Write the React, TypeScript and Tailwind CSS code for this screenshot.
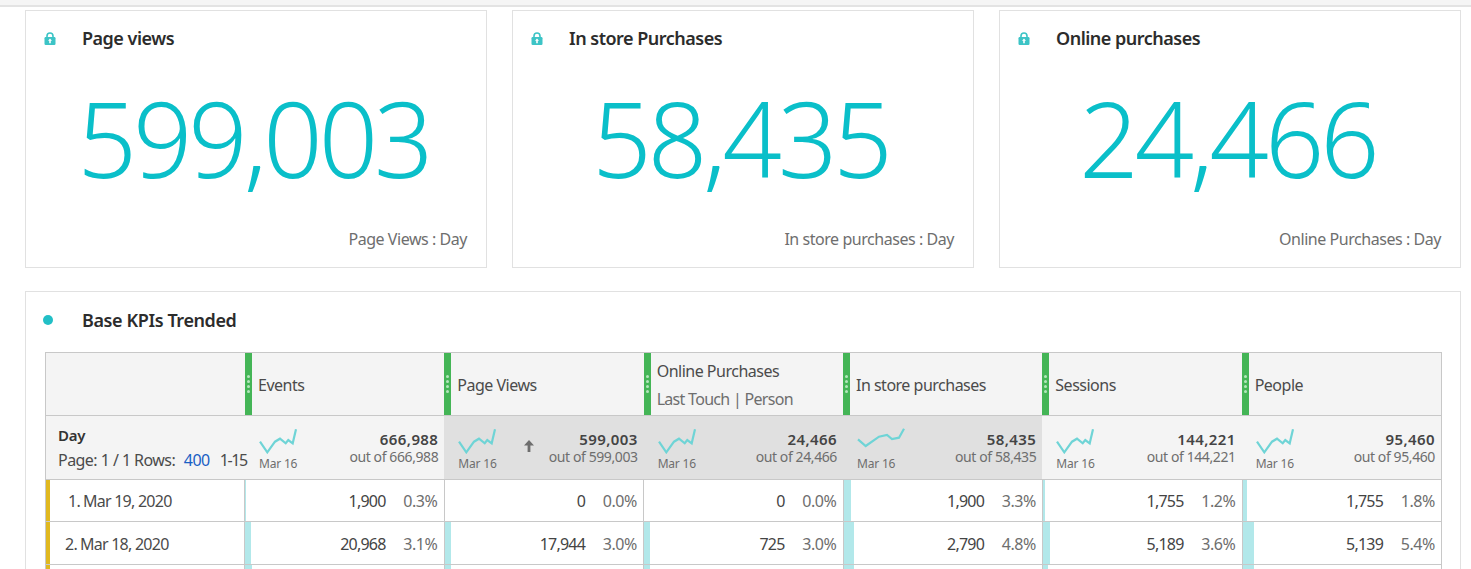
import React from 'react'

const font = { fontFamily: '"Noto Sans", "Open Sans", sans-serif' }

const normalSpark = 'M1 13.7 L8.3 24.3 L16 13.7 L21 10.7 L26.7 15.3 L29.3 12 L33.7 15.3 L37 1.3'
const flatSpark = 'M1 11.3 L8.7 18 L22 8.7 L30 7 L35 11 L42 9.7 L47 0.8'

const columns = [
  { name: 'Events', total: '666,988', selected: false, spark: normalSpark, rows: [['1,900', '0.3%', 1], ['20,968', '3.1%', 6], ['', '', 7]] },
  { name: 'Page Views', total: '599,003', selected: true, arrow: true, spark: normalSpark, rows: [['0', '0.0%', 0], ['17,944', '3.0%', 6], ['', '', 6]] },
  { name: 'Online Purchases', sub: 'Last Touch | Person', total: '24,466', selected: true, spark: normalSpark, rows: [['0', '0.0%', 0], ['725', '3.0%', 6], ['', '', 6]] },
  { name: 'In store purchases', total: '58,435', selected: true, spark: flatSpark, rows: [['1,900', '3.3%', 7], ['2,790', '4.8%', 10], ['', '', 10]] },
  { name: 'Sessions', total: '144,221', selected: false, spark: normalSpark, rows: [['1,755', '1.2%', 2], ['5,189', '3.6%', 7], ['', '', 5]] },
  { name: 'People', total: '95,460', selected: false, spark: normalSpark, rows: [['1,755', '1.8%', 4], ['5,139', '5.4%', 11], ['', '', 11]] },
]

const gridCols = 'grid grid-cols-[199px_repeat(6,minmax(0,1fr))]'
const bodyCols = 'grid grid-cols-[198px_repeat(6,minmax(0,1fr))]'

function LockIcon() {
  return (
    <svg width="12" height="13" viewBox="0 0 12 13" className="shrink-0">
      <path d="M3 6 V4 a3 3 0 0 1 6 0 V6" fill="none" stroke="#3cc4c6" strokeWidth="1.6" />
      <rect x="0.5" y="5" width="11" height="8" rx="1.2" fill="#3cc4c6" />
      <path d="M6 6.6 L8 8.8 H6.8 V11.2 H5.2 V8.8 H4 Z" fill="#fff" />
    </svg>
  )
}

function KpiCard({ title, value, footer }: { title: string; value: string; footer: string }) {
  return (
    <div className="flex h-[258px] flex-col border border-[#e1e1e1] bg-white">
      <div className="flex h-[55px] items-center pl-[18px]">
        <LockIcon />
        <h3 className="ml-[26px] text-[18px] font-semibold tracking-[-0.5px] text-[#2c2c2c]">{title}</h3>
      </div>
      <div className="flex h-[144px] items-center justify-center pr-[5px] text-[104px] font-light leading-none tracking-[-4px] text-[#0abfc9]">
        {value}
      </div>
      <div className="mt-[17px] pr-[19px] text-right text-[16px] tracking-[-0.45px] text-[#6e6e6e]">{footer}</div>
    </div>
  )
}

function Grip() {
  return (
    <div className="flex h-full w-[7px] shrink-0 flex-col items-center justify-center gap-[2px] bg-[#44b556]">
      <span className="h-[3px] w-[3px] rounded-full bg-[#b5e6bc]" />
      <span className="h-[3px] w-[3px] rounded-full bg-[#b5e6bc]" />
      <span className="h-[3px] w-[3px] rounded-full bg-[#b5e6bc]" />
      <span className="h-[3px] w-[3px] rounded-full bg-[#b5e6bc]" />
    </div>
  )
}

function Spark({ d }: { d: string }) {
  return (
    <svg width="48" height="26" viewBox="0 0 48 26" className="block">
      <path d={d} fill="none" stroke="#6fd4d6" strokeWidth="2.2" />
    </svg>
  )
}

function ArrowUp() {
  return (
    <svg width="12" height="14" viewBox="0 0 12 14">
      <path d="M6 1 L11 6.5 H7.4 V13 H4.6 V6.5 H1 Z" fill="#6e6e6e" />
    </svg>
  )
}

export default function App() {
  return (
    <div style={font} className="h-[569px] w-[1471px] overflow-hidden bg-white">
      <div className="h-[7px] border-b-2 border-[#e3e3e3] bg-[#f5f5f5]" />

      <div className="mt-[3px] grid grid-cols-3 gap-[25px] pl-[25px] pr-[10px]">
        <KpiCard title="Page views" value="599,003" footer="Page Views : Day" />
        <KpiCard title="In store Purchases" value="58,435" footer="In store purchases : Day" />
        <KpiCard title="Online purchases" value="24,466" footer="Online Purchases : Day" />
      </div>

      <div className="ml-[25px] mr-[10px] mt-[23px] border border-[#e1e1e1] pb-10 pl-[19px] pr-[18px]">
        <div className="flex h-[60px] items-center pb-[4px]">
          <span className="ml-[-2px] h-[10px] w-[10px] rounded-full bg-[#22bfc6]" />
          <h2 className="ml-[29px] text-[18px] font-semibold tracking-[-0.4px] text-[#2c2c2c]">Base KPIs Trended</h2>
        </div>

        <div className="border border-[#c8c8c8] text-[#4b4b4b]">
          {/* Column headers */}
          <div className={`${gridCols} h-[63px] border-b border-[#c8c8c8] bg-[#f4f4f4]`}>
            <div />
            {columns.map((c) => (
              <div key={c.name} className="flex h-full items-center">
                <Grip />
                <div className="ml-[6px] pt-[1px] text-[16px] leading-[28px] tracking-[-0.5px]">
                  <div>{c.name}</div>
                  {c.sub && <div className="tracking-[-0.7px] text-[#6e6e6e]">{c.sub}</div>}
                </div>
              </div>
            ))}
          </div>

          {/* Summary row */}
          <div className={`${gridCols} h-[64px] border-b border-[#c8c8c8] bg-[#f4f4f4]`}>
            <div className="pl-[12px] pt-[7px]">
              <div className="text-[15px] font-semibold leading-[24px] tracking-[-0.3px] text-[#333]">Day</div>
              <div className="whitespace-nowrap text-[16px] leading-[27px] tracking-[-0.55px]">
                Page: 1 / 1 Rows: <span className="ml-[5px] text-[#1a5fc4]">400</span>
                <span className="ml-[10px] tracking-[-1.4px]">1-15</span>
              </div>
            </div>
            {columns.map((c) => (
              <div key={c.name} className={`flex h-full ${c.selected ? 'bg-[#e0e0e0]' : ''}`}>
                <div className="ml-[14px] pt-[12px]">
                  <Spark d={c.spark} />
                  <div className="mt-[2px] text-[12px] leading-[16px] tracking-[-0.2px] text-[#6e6e6e]">Mar 16</div>
                </div>
                <div className="ml-auto flex pr-[6px] pt-[14px]">
                  {c.arrow && <div className="mr-[14px] pt-[9px]"><ArrowUp /></div>}
                  <div className="text-right">
                    <div className="text-[15px] font-semibold leading-[18px] tracking-[0.4px] text-[#444]">{c.total}</div>
                    <div className="text-[14px] leading-[17px] tracking-[-0.4px] text-[#6e6e6e]">out of {c.total}</div>
                  </div>
                </div>
              </div>
            ))}
          </div>

          {/* Data rows */}
          {['Mar 19, 2020', 'Mar 18, 2020', ''].map((day, i) => (
            <div key={i} className={`${bodyCols} ${i === 1 ? 'h-[43px]' : 'h-[42px]'} border-b border-[#c8c8c8] bg-white`}>
              <div className="flex h-full items-center border-l-[4px] border-[#e0b81f] pt-[1px] text-[16px] tracking-[-0.75px]">
                {day && <span className={i === 0 ? 'ml-[18px]' : 'ml-[15px]'}>{i + 1}.</span>}
                {day && <span className="ml-[3px]">{day}</span>}
              </div>
              {columns.map((c) => {
                const [count, pct, bar] = c.rows[i]
                return (
                  <div key={c.name} className="relative flex h-full items-center justify-end border-l border-[#c8c8c8] pr-[6px] pt-[1px] text-[16px]">
                    <div className="absolute bottom-0 left-0 top-0 bg-[#b2e8ea]" style={{ width: `${bar}px` }} />
                    <span className="tracking-[-0.8px] text-[#444]">{count}</span>
                    <span className="ml-[16px] w-[36px] text-right tracking-[-0.4px] text-[#6e6e6e]">{pct}</span>
                  </div>
                )
              })}
            </div>
          ))}
        </div>
      </div>
    </div>
  )
}
